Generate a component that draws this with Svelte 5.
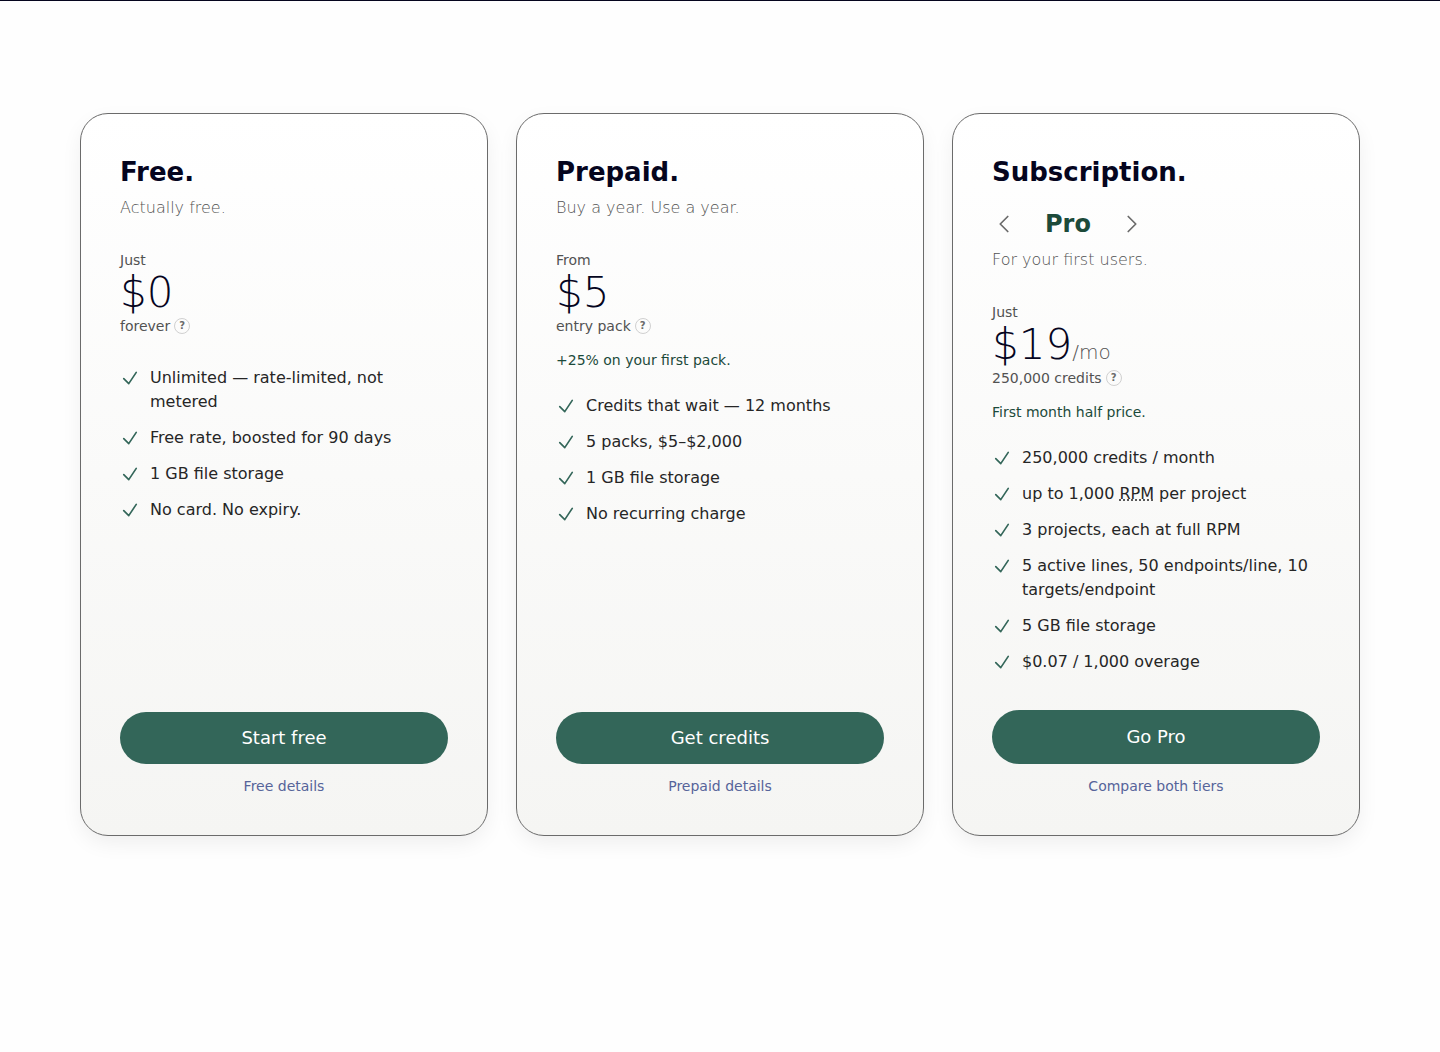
<script>
	const plans = [
		{
			name: 'Free.',
			tagline: 'Actually free.',
			prefix: 'Just',
			price: '$0',
			unit: 'forever',
			features: [
				'Unlimited — rate-limited, not metered',
				'Free rate, boosted for 90 days',
				'1 GB file storage',
				'No card. No expiry.'
			],
			cta: 'Start free',
			more: 'Free details'
		},
		{
			name: 'Prepaid.',
			tagline: 'Buy a year. Use a year.',
			prefix: 'From',
			price: '$5',
			unit: 'entry pack',
			promo: '+25% on your first pack.',
			features: [
				'Credits that wait — 12 months',
				'5 packs, $5–$2,000',
				'1 GB file storage',
				'No recurring charge'
			],
			cta: 'Get credits',
			more: 'Prepaid details'
		},
		{
			name: 'Subscription.',
			tier: 'Pro',
			tagline: 'For your first users.',
			prefix: 'Just',
			price: '$19',
			period: '/mo',
			unit: '250,000 credits',
			promo: 'First month half price.',
			features: [
				'250,000 credits / month',
				{ before: 'up to 1,000 ', abbr: 'RPM', title: 'Requests per minute', after: ' per project' },
				'3 projects, each at full RPM',
				'5 active lines, 50 endpoints/line, 10 targets/endpoint',
				'5 GB file storage',
				'$0.07 / 1,000 overage'
			],
			cta: 'Go Pro',
			more: 'Compare both tiers'
		}
	];
</script>

<section class="pricing">
	<div class="plans">
		{#each plans as plan}
			<article class="card">
				<h2>{plan.name}</h2>

				{#if plan.tier}
					<div class="tiers">
						<button class="arrow" aria-label="Previous tier">
							<svg viewBox="0 0 24 24"><path d="M15.75 19.5 8.25 12l7.5-7.5" /></svg>
						</button>
						<span class="tier">{plan.tier}</span>
						<button class="arrow" aria-label="Next tier">
							<svg viewBox="0 0 24 24"><path d="m8.25 4.5 7.5 7.5-7.5 7.5" /></svg>
						</button>
					</div>
				{/if}

				<p class="tagline">{plan.tagline}</p>

				<div class="small">{plan.prefix}</div>
				<div class="price">
					{plan.price}{#if plan.period}<span class="period">{plan.period}</span>{/if}
				</div>
				<div class="small unit">
					{plan.unit}
					<button class="help" aria-label="About {plan.unit}">?</button>
				</div>

				{#if plan.promo}
					<p class="promo">{plan.promo}</p>
				{/if}

				<ul>
					{#each plan.features as feature}
						<li>
							<svg class="check" viewBox="0 0 24 24"><path d="m4.5 12.75 6 6 9-13.5" /></svg>
							{#if feature.abbr}
								<span>{feature.before}<abbr title={feature.title}>{feature.abbr}</abbr>{feature.after}</span>
							{:else}
								<span>{feature}</span>
							{/if}
						</li>
					{/each}
				</ul>

				<div class="actions">
					{#if plan.tier}
						<button class="cta tall">{plan.cta}</button>
					{:else}
						<a class="cta" href="#start">{plan.cta}</a>
					{/if}
					<a class="more" href="#details">{plan.more}</a>
				</div>
			</article>
		{/each}
	</div>
</section>

<style>
	:global(body) {
		background: #fefefe;
	}

	.pricing {
		border-top: 1px solid #05051e;
		padding: 112px 80px;
		font-family: 'DejaVu Sans', sans-serif;
		font-size: 16px;
		line-height: 24px;
		color: #262626;
	}

	.plans {
		display: grid;
		grid-template-columns: repeat(3, minmax(0, 1fr));
		gap: 28px;
		max-width: 1280px;
		margin: 0 auto;
	}

	.card {
		display: flex;
		flex-direction: column;
		box-sizing: border-box;
		padding: 39px;
		border: 1px solid #6b6b6b;
		border-radius: 28px;
		background: linear-gradient(#ffffff, #f5f5f3);
		box-shadow: 0 8px 22px -2px rgba(0, 0, 0, 0.07);
	}

	h2 {
		margin: 0;
		font-size: 26px;
		line-height: 38px;
		font-weight: 700;
		color: #05051e;
	}

	.tiers {
		display: flex;
		align-items: center;
		gap: 4px;
		height: 34px;
		margin: 16px 0 2px;
	}

	.tier {
		min-width: 96px;
		text-align: center;
		font-size: 24px;
		font-weight: 700;
		color: #1c4a3a;
	}

	.arrow {
		width: 24px;
		height: 24px;
		padding: 0;
		border: 0;
		background: none;
		color: #6b6b6b;
		cursor: pointer;
	}

	svg {
		display: block;
		fill: none;
		stroke: currentColor;
		stroke-width: 1.75;
		stroke-linecap: round;
		stroke-linejoin: round;
	}

	.tagline {
		margin: 4px 0 28px;
		line-height: 26px;
		font-weight: 200;
		color: #525252;
	}

	.small {
		font-size: 14px;
		line-height: 22px;
		color: #525252;
	}

	.price {
		font-size: 42px;
		line-height: 44px;
		font-weight: 200;
		color: #05051e;
	}

	.period {
		font-size: 20px;
		line-height: 20px;
		color: #525252;
	}

	.unit {
		display: flex;
		align-items: center;
		gap: 4px;
	}

	.help {
		box-sizing: border-box;
		width: 16px;
		height: 16px;
		padding: 0;
		border: 1px solid #d0d0d0;
		border-radius: 50%;
		background: none;
		font: 700 10px/14px 'DejaVu Sans', sans-serif;
		color: #6b6b6b;
		cursor: pointer;
	}

	.promo {
		margin: 12px 0 0;
		font-size: 14px;
		line-height: 22px;
		color: #1c4a3a;
	}

	ul {
		display: flex;
		flex-direction: column;
		gap: 12px;
		margin: 29px 0 36px;
		padding: 0;
		list-style: none;
	}

	.promo + ul {
		margin-top: 23px;
	}

	li {
		display: flex;
		gap: 10px;
	}

	.check {
		flex: none;
		width: 20px;
		height: 20px;
		margin-top: 2px;
		stroke-width: 2;
		color: #336659;
	}

	abbr {
		text-decoration: underline dotted;
	}

	.actions {
		display: flex;
		flex-direction: column;
		margin-top: auto;
		text-align: center;
	}

	.cta {
		padding: 14px 24px;
		border: 0;
		border-radius: 28px;
		background: #336659;
		font-family: inherit;
		font-size: 18px;
		line-height: 24px;
		color: #fff;
		text-decoration: none;
		cursor: pointer;
	}

	.tall {
		padding: 15px 24px;
	}

	.more {
		align-self: center;
		margin-top: 12px;
		font-size: 14px;
		line-height: 20px;
		color: #56649a;
		text-decoration: none;
	}
</style>
